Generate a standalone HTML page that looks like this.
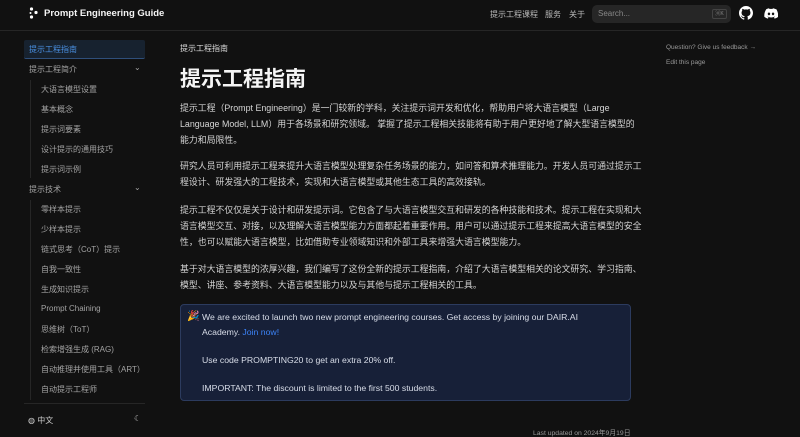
<!DOCTYPE html>
<html><head><meta charset="utf-8"><style>
*{margin:0;padding:0;box-sizing:border-box}
body{width:800px;height:436px;overflow:hidden;background:#111111;color:#e5e5e5;font-family:"Liberation Sans","Noto Sans CJK SC",sans-serif;position:relative}
.a{position:absolute;white-space:nowrap}
.hd{position:absolute;left:0;top:0;width:800px;height:31px;border-bottom:1px solid #262626}
.sb{font-size:8px;color:#a3a3a3}
.p{position:absolute;left:180px;white-space:nowrap;font-size:8.9px;line-height:16px;color:#d4d4d4}
.c{position:absolute;left:202px;white-space:nowrap;font-size:8.7px;color:#d8dde8}
</style></head><body>
<div class="hd">
 <svg class="a" style="left:29px;top:7px" width="14" height="12"><circle cx="2.5" cy="2" r="1.6" fill="#fff"/><circle cx="2.5" cy="10" r="1.6" fill="#fff"/><circle cx="7" cy="5.5" r="1.6" fill="#fff"/><circle cx="1.5" cy="6" r="1" fill="#fff"/></svg>
 <div class="a" style="left:44px;top:8px;font-size:9.5px;font-weight:bold;color:#f5f5f5">Prompt Engineering Guide</div>
 <div class="a" style="left:490px;top:9px;font-size:8px;color:#bbb">提示工程课程</div>
 <div class="a" style="left:545px;top:9px;font-size:8px;color:#bbb">服务</div>
 <div class="a" style="left:569px;top:9px;font-size:8px;color:#bbb">关于</div>
 <div class="a" style="left:592px;top:5px;width:139px;height:18px;background:#262626;border-radius:5px"></div>
 <div class="a" style="left:598px;top:9px;font-size:8px;color:#888">Search...</div>
 <div class="a" style="left:712px;top:9px;width:15px;height:10px;border:1px solid #444;border-radius:2px;font-size:5px;color:#888;text-align:center;line-height:8px">⌘K</div>
 <svg class="a" style="left:739px;top:6px" width="14" height="14" viewBox="0 0 16 16"><path fill="#fff" d="M8 0C3.58 0 0 3.58 0 8c0 3.54 2.29 6.53 5.47 7.59.4.07.55-.17.55-.38v-1.33c-2.23.48-2.7-1.07-2.7-1.07-.36-.92-.89-1.17-.89-1.17-.73-.5.06-.49.06-.49.8.06 1.23.83 1.23.83.71 1.22 1.87.87 2.33.66.07-.52.28-.87.51-1.07-1.78-.2-3.64-.89-3.64-3.95 0-.87.31-1.59.82-2.15-.08-.2-.36-1.02.08-2.12 0 0 .67-.21 2.2.82a7.6 7.6 0 0 1 4 0c1.53-1.04 2.2-.82 2.2-.82.44 1.1.16 1.92.08 2.12.51.56.82 1.27.82 2.15 0 3.07-1.87 3.75-3.65 3.95.29.25.54.73.54 1.48v2.2c0 .21.15.46.55.38A8 8 0 0 0 16 8c0-4.42-3.58-8-8-8z"/></svg>
 <svg class="a" style="left:764px;top:8px" width="14" height="11" viewBox="0 0 24 18"><path fill="#fff" d="M20 1.5A19.6 19.6 0 0015.2 0l-.6 1.2a18 18 0 00-5.3 0L8.8 0A19.6 19.6 0 004 1.5C1 6 .2 10.4.6 14.8a19.8 19.8 0 006 3l1.3-2a12.6 12.6 0 01-2-1l.5-.4a14 14 0 0012 0l.5.4a12.6 12.6 0 01-2 1l1.3 2a19.8 19.8 0 006-3c.5-5.1-.8-9.5-3.2-13.3zM8.5 12.1c-1.2 0-2.1-1.1-2.1-2.4s.9-2.4 2.1-2.4 2.2 1.1 2.1 2.4c0 1.3-.9 2.4-2.1 2.4zm7 0c-1.2 0-2.1-1.1-2.1-2.4s.9-2.4 2.1-2.4 2.2 1.1 2.1 2.4c0 1.3-.9 2.4-2.1 2.4z"/></svg>
</div>
<div class="a" style="left:24px;top:40px;width:121px;height:19px;background:#17222f;border-bottom:1px solid #2f4f7a;border-radius:2px"></div>
<div class="a sb" style="left:29px;top:44px;color:#4a90e2">提示工程指南</div>
<div class="a sb" style="left:29px;top:64px">提示工程简介</div><div class="a sb" style="left:134px;top:63px">⌄</div>
<div class="a" style="left:30px;top:80px;width:1px;height:98px;background:#262626"></div>
<div class="a sb" style="left:41px;top:84px">大语言模型设置</div>
<div class="a sb" style="left:41px;top:104px">基本概念</div>
<div class="a sb" style="left:41px;top:124px">提示词要素</div>
<div class="a sb" style="left:41px;top:144px">设计提示的通用技巧</div>
<div class="a sb" style="left:41px;top:164px">提示词示例</div>
<div class="a sb" style="left:29px;top:184px">提示技术</div><div class="a sb" style="left:134px;top:183px">⌄</div>
<div class="a" style="left:30px;top:200px;width:1px;height:200px;background:#262626"></div>
<div class="a sb" style="left:41px;top:204px">零样本提示</div>
<div class="a sb" style="left:41px;top:224px">少样本提示</div>
<div class="a sb" style="left:41px;top:244px">链式思考（CoT）提示</div>
<div class="a sb" style="left:41px;top:264px">自我一致性</div>
<div class="a sb" style="left:41px;top:284px">生成知识提示</div>
<div class="a sb" style="left:41px;top:304px">Prompt Chaining</div>
<div class="a sb" style="left:41px;top:324px">思维树（ToT）</div>
<div class="a sb" style="left:41px;top:344px">检索增强生成 (RAG)</div>
<div class="a sb" style="left:41px;top:364px">自动推理并使用工具（ART）</div>
<div class="a sb" style="left:41px;top:384px">自动提示工程师</div>
<div class="a" style="left:24px;top:403px;width:121px;height:1px;background:#262626"></div>
<div class="a sb" style="left:28px;top:415px;color:#ccc">◍ 中文</div>
<div class="a sb" style="left:134px;top:414px;color:#ccc">☾</div>

<div class="a" style="left:180px;top:43px;font-size:8px;color:#ddd">提示工程指南</div>
<div class="a" style="left:180px;top:63px;font-size:21px;font-weight:bold;color:#f5f5f5">提示工程指南</div>
<div class="p" style="top:100px">提示工程（Prompt Engineering）是一门较新的学科，关注提示词开发和优化，帮助用户将大语言模型（Large<br>Language Model, LLM）用于各场景和研究领域。 掌握了提示工程相关技能将有助于用户更好地了解大型语言模型的<br>能力和局限性。</div>
<div class="p" style="top:158px">研究人员可利用提示工程来提升大语言模型处理复杂任务场景的能力，如问答和算术推理能力。开发人员可通过提示工<br>程设计、研发强大的工程技术，实现和大语言模型或其他生态工具的高效接轨。</div>
<div class="p" style="top:202px">提示工程不仅仅是关于设计和研发提示词。它包含了与大语言模型交互和研发的各种技能和技术。提示工程在实现和大<br>语言模型交互、对接，以及理解大语言模型能力方面都起着重要作用。用户可以通过提示工程来提高大语言模型的安全<br>性，也可以赋能大语言模型，比如借助专业领域知识和外部工具来增强大语言模型能力。</div>
<div class="p" style="top:261px">基于对大语言模型的浓厚兴趣，我们编写了这份全新的提示工程指南，介绍了大语言模型相关的论文研究、学习指南、<br>模型、讲座、参考资料、大语言模型能力以及与其他与提示工程相关的工具。</div>
<div class="a" style="left:180px;top:304px;width:451px;height:97px;background:#172038;border:1px solid #2c3b5e;border-radius:4px"></div>
<div class="a" style="left:187px;top:311px;font-size:10px">🎉</div>
<div class="c" style="top:312px">We are excited to launch two new prompt engineering courses. Get access by joining our DAIR.AI</div>
<div class="c" style="top:327px">Academy. <span style="color:#3b82f6">Join now!</span></div>
<div class="c" style="top:355px">Use code PROMPTING20 to get an extra 20% off.</div>
<div class="c" style="top:383px">IMPORTANT: The discount is limited to the first 500 students.</div>
<div class="a" style="left:533px;top:427px;font-size:6.8px;color:#999">Last updated on 2024年9月19日</div>
<div class="a" style="left:666px;top:44px;font-size:6.5px;color:#999">Question? Give us feedback →</div>
<div class="a" style="left:666px;top:59px;font-size:6.5px;color:#999">Edit this page</div>
</body></html>
